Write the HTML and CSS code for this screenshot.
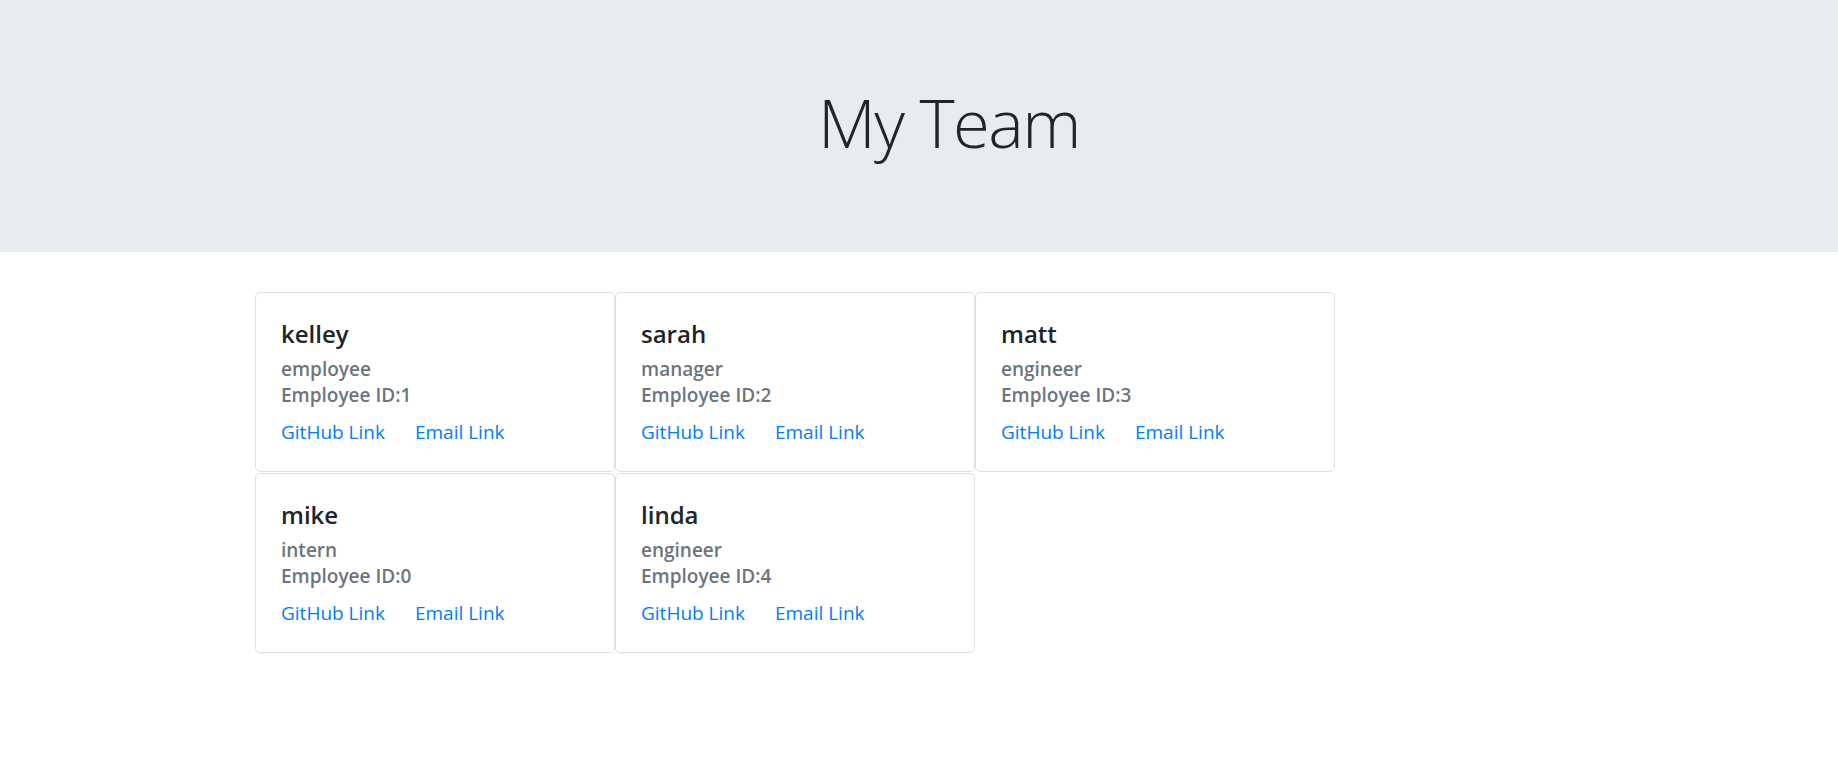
FILE: index.html
```html
<!DOCTYPE html>
<html lang="en">
<head>
<meta charset="utf-8">
<title>My Team</title>
<link rel="stylesheet" href="styles.css">
</head>
<body>
<header class="jumbotron">
  <h1 class="display">My Team</h1>
</header>
<main class="team">
  <div class="card">
    <h5 class="card-title">kelley</h5>
    <h6 class="card-subtitle">employee</h6>
    <p class="card-id">Employee ID:1</p>
    <div class="card-links"><a href="#">GitHub Link</a><a href="#">Email Link</a></div>
  </div>
  <div class="card">
    <h5 class="card-title">sarah</h5>
    <h6 class="card-subtitle">manager</h6>
    <p class="card-id">Employee ID:2</p>
    <div class="card-links"><a href="#">GitHub Link</a><a href="#">Email Link</a></div>
  </div>
  <div class="card">
    <h5 class="card-title">matt</h5>
    <h6 class="card-subtitle">engineer</h6>
    <p class="card-id">Employee ID:3</p>
    <div class="card-links"><a href="#">GitHub Link</a><a href="#">Email Link</a></div>
  </div>
  <div class="card">
    <h5 class="card-title">mike</h5>
    <h6 class="card-subtitle">intern</h6>
    <p class="card-id">Employee ID:0</p>
    <div class="card-links"><a href="#">GitHub Link</a><a href="#">Email Link</a></div>
  </div>
  <div class="card">
    <h5 class="card-title">linda</h5>
    <h6 class="card-subtitle">engineer</h6>
    <p class="card-id">Employee ID:4</p>
    <div class="card-links"><a href="#">GitHub Link</a><a href="#">Email Link</a></div>
  </div>
</main>
</body>
</html>
```
FILE: styles.css
```css
* { box-sizing: border-box; }
html, body { margin: 0; padding: 0; background: #fff; }
body {
  font-family: "Open Sans", "Noto Sans", sans-serif;
  color: #212529;
  font-size: 19px;
}
.jumbotron {
  background: #e9ecef;
  height: 252px;
  padding: 80px 0 0 60px;
  text-align: center;
}
.display {
  margin: 0;
  font-size: 67px;
  line-height: 84px;
  font-weight: 300;
  letter-spacing: -1.5px;
  color: #212529;
}
.team {
  display: grid;
  grid-template-columns: repeat(3, 360px);
  grid-auto-rows: 180px;
  row-gap: 1px;
  margin: 40px 0 0 255px;
}
.card {
  border: 1px solid #dfdfdf;
  border-radius: 5px;
  padding: 26px 25px;
  background: #fff;
}
.card-title {
  margin: 0 0 10px;
  font-size: 24px;
  line-height: 29px;
  font-weight: 600;
  color: #212529;
}
.card-subtitle {
  margin: 0 0 3px;
  font-size: 19px;
  line-height: 23px;
  font-weight: 600;
  color: #6c757d;
}
.card-id {
  margin: 0 0 11px;
  font-size: 19px;
  line-height: 23px;
  font-weight: 600;
  color: #6c757d;
}
.card-links {
  display: flex;
  gap: 30px;
  font-size: 19px;
  line-height: 28px;
}
.card-links a {
  color: #007bff;
  text-decoration: none;
}
```
